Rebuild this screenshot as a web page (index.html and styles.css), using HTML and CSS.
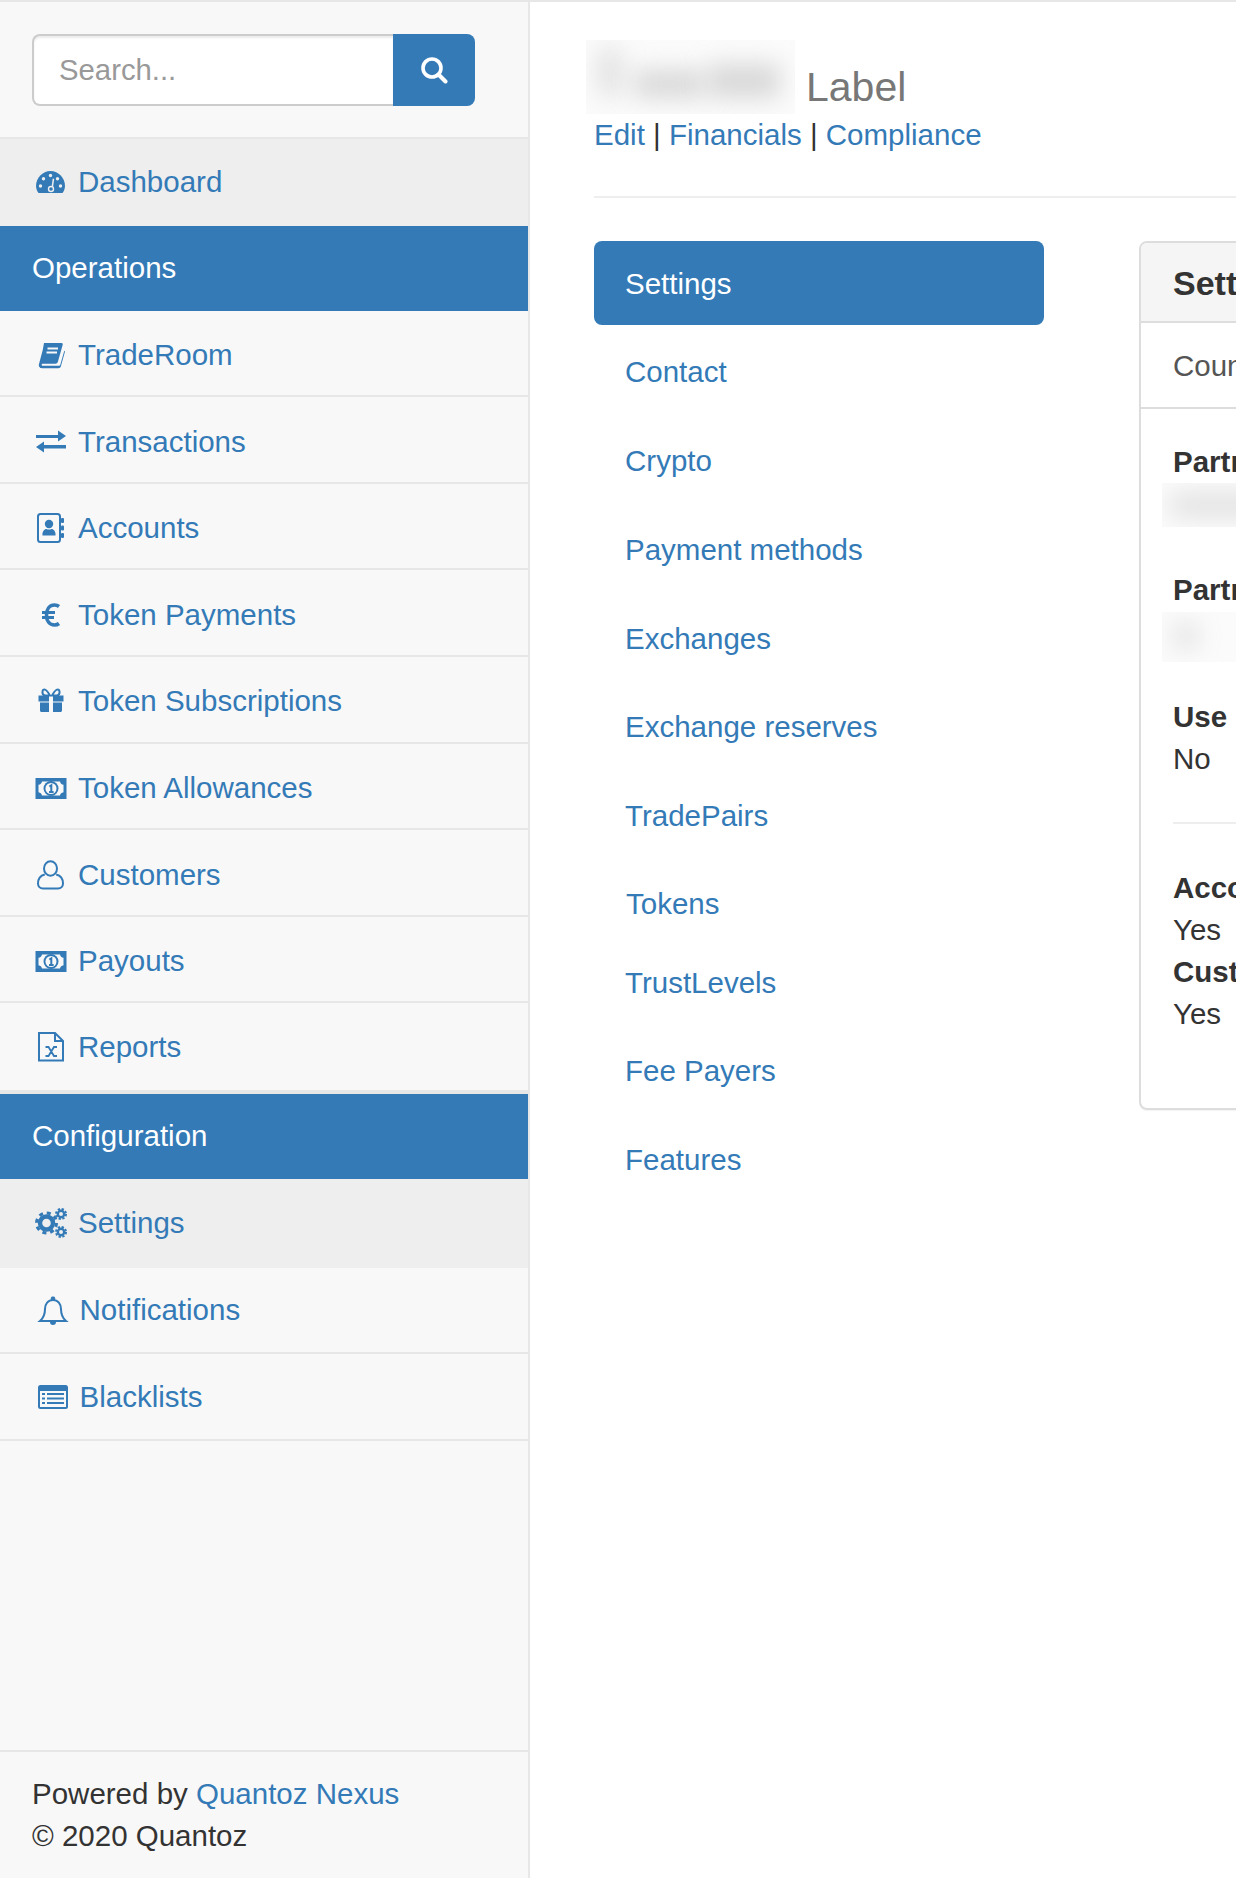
FILE: index.html
```html
<!DOCTYPE html>
<html lang="en">
<head>
<meta charset="utf-8">
<title>Label - Settings</title>
<link rel="stylesheet" href="styles.css">
</head>
<body>
<div class="app">
  <aside class="sidebar">
    <form class="search">
      <input class="search-input" type="text" placeholder="Search...">
      <button class="search-btn" type="button" aria-label="Search">
        <svg width="28" height="28" viewBox="0 0 28 28"><circle cx="12" cy="12" r="9" fill="none" stroke="#fff" stroke-width="3.6"/><path d="M18.5 18.5L25.5 25.5" stroke="#fff" stroke-width="4" stroke-linecap="round"/></svg>
      </button>
    </form>
    <nav class="side-nav">
      <a class="row row-tall row-current first" href="#"><svg class="ic" viewBox="0 0 32 30"><path d="M3.5 26C2 24 1 21.500 1 19 1 11 7.500 4 15.500 4S30 11 30 19c0 2.500-1 5-2.500 7z"/><g class="hole"><circle cx="5.500" cy="19" r="1.700"/><circle cx="8.500" cy="11.800" r="1.700"/><circle cx="15.500" cy="8.500" r="1.700"/><circle cx="25.500" cy="19" r="1.700"/><circle cx="22.500" cy="11.800" r="1.700"/><path d="M16.300 22L17.700 11.500 19.200 12 17.800 22z"/><circle cx="16" cy="22" r="3.200"/></g><circle cx="16" cy="22" r="1.800"/></svg><span>Dashboard</span></a>
      <div class="section">Operations</div>
      <a class="row" href="#"><svg class="ic" viewBox="0 0 32 30"><path d="M9 3h17.500c1 0 1.500.8 1.200 1.800l-4.800 17c-.4 1.300-1.200 2-2.500 2H8c-1 0-1.500.5-1.300 1.100.2.600.9.900 1.800.9h15.500c.7 0 1-.4 1.300-1l4-14 .7.800-4.200 15c-.3 1.100-1.200 1.700-2.300 1.700H7c-2 0-3.800-1.800-3-4.200l3.800-14.300z"/><path class="lines" d="M12.500 8.500h10.500M11.500 12.500h10.500" stroke-width="2"/></svg><span>TradeRoom</span></a>
      <a class="row" href="#"><svg class="ic" viewBox="0 0 32 30"><path d="M1 8h22V3.500l8 5.500-8 5.500V11H1zM31 18H9v-3.500L1 20l8 5.500V21.500h22z"/></svg><span>Transactions</span></a>
      <a class="row" href="#"><svg class="ic" viewBox="0 0 32 30"><rect class="line" x="3" y="1" width="22" height="28" rx="2.500"/><rect x="26" y="5" width="3" height="5" rx="1"/><rect x="26" y="12.500" width="3" height="5" rx="1"/><rect x="26" y="20" width="3" height="5" rx="1"/><circle cx="14" cy="11" r="4.200"/><path d="M7.500 22.500c-.5-4 2-6.500 4-6.500 1 .8 4 .8 5 0 2 0 4.500 2.500 4 6.500z"/></svg><span>Accounts</span></a>
      <a class="row" href="#"><svg class="ic" viewBox="0 0 32 30"><path class="line thick" d="M24 6.500C22.500 5.300 21 5 19.500 5 14.500 5 11.500 9 11.500 15s3 10 8 10c1.500 0 3-.3 4.500-1.500"/><path class="line bar" d="M7 12.500h13M7 17.500h12"/></svg><span>Token Payments</span></a>
      <a class="row" href="#"><svg class="ic" viewBox="0 0 32 30"><path class="line" d="M15 9.500C13 6 11.500 3.500 9.500 3.500 7 3.500 6.500 8 9.500 9.500zM17 9.500C19 6 20.500 3.500 22.500 3.500 25 3.500 25.500 8 22.500 9.500z"/><path d="M3.500 9.500h10.500v6H3.500zM18 9.500h10.500v6H18zM5 16.500h9v9.500H6.500c-.8 0-1.500-.7-1.500-1.500zM18 16.500h9v8c0 .8-.7 1.500-1.500 1.500H18z"/></svg><span>Token Subscriptions</span></a>
      <a class="row" href="#"><svg class="ic" viewBox="0 0 32 30"><rect x="0.500" y="5" width="31" height="21"/><path class="hole" d="M7 8.500h18c.4 1.800 1.500 3 3.500 3.300v7.400c-2 .3-3.100 1.500-3.500 3.300H7c-.4-1.800-1.500-3-3.500-3.300v-7.400c2-.3 3.100-1.500 3.500-3.300z"/><circle cx="16" cy="15.500" r="7.500"/><circle class="hole" cx="16" cy="15.500" r="5.500"/><path class="line one" d="M14.300 13.500l2-1.200v6.600M14 19h4.600"/></svg><span>Token Allowances</span></a>
      <a class="row" href="#"><svg class="ic" viewBox="0 0 32 30"><ellipse class="line" cx="15.500" cy="8.500" rx="6.500" ry="7.300"/><path class="line" d="M9.800 14.500C6 15.500 3 18.500 3 23.500c0 2.800 2 5 5 5h15c3 0 5-2.200 5-5 0-5-3-8-6.800-9"/></svg><span>Customers</span></a>
      <a class="row" href="#"><svg class="ic" viewBox="0 0 32 30"><rect x="0.500" y="5" width="31" height="21"/><path class="hole" d="M7 8.500h18c.4 1.800 1.500 3 3.500 3.300v7.400c-2 .3-3.100 1.500-3.500 3.300H7c-.4-1.800-1.500-3-3.500-3.300v-7.400c2-.3 3.100-1.500 3.500-3.300z"/><circle cx="16" cy="15.500" r="7.500"/><circle class="hole" cx="16" cy="15.500" r="5.500"/><path class="line one" d="M14.300 13.500l2-1.200v6.600M14 19h4.600"/></svg><span>Payouts</span></a>
      <a class="row row-last" href="#"><svg class="ic" viewBox="0 0 32 30"><path class="line" d="M4 1h16l8 8v19.500H4zM20 1v8h8"/><path class="line cross" d="M10.500 15h3l5.500 9h3M10.500 24h3l5.500-9h3"/></svg><span>Reports</span></a>
      <div class="section">Configuration</div>
      <a class="row row-tall row-current row-config" href="#"><svg class="ic" viewBox="0 0 32 30"><circle class="gear-teeth" cx="11.500" cy="15" r="10"/><circle class="gear" cx="11.500" cy="15" r="6.500"/><circle class="gear-teeth small" cx="26" cy="6" r="5"/><circle class="gear small" cx="26" cy="6" r="3.200"/><circle class="gear-teeth small" cx="26" cy="24" r="5"/><circle class="gear small" cx="26" cy="24" r="3.200"/></svg><span>Settings</span></a>
      <a class="row row-shift" href="#"><svg class="ic" viewBox="0 0 32 30"><path class="line" d="M3 26c3-2.500 5-5 5-12 0-5 3-9 8-9s8 4 8 9c0 7 2 9.500 5 12z"/><path d="M16 1.500a2 2 0 0 1 1.600 3.500h-3.200A2 2 0 0 1 16 1.500zM13 27h6a3 3 0 0 1-6 0z"/></svg><span>Notifications</span></a>
      <a class="row row-shift" href="#"><svg class="ic" viewBox="0 0 32 30"><rect x="1" y="3" width="30" height="24" rx="2.500"/><rect class="hole" x="3" y="9" width="26" height="16"/><path class="lines-blue" d="M5 12h3M10 12h17M5 16.500h3M10 16.500h17M5 21h3M10 21h17"/></svg><span>Blacklists</span></a>
    </nav>
    <footer class="side-foot">
      Powered by <a href="#">Quantoz Nexus</a><br>
      &copy; 2020 Quantoz
    </footer>
  </aside>

  <main class="main">
    <header class="page-head">
      <div class="title-line">
        <div class="redact redact-title"><i class="blob b1"></i><i class="blob b2"></i><i class="blob b3"></i></div>
        <h1 class="page-title">Label</h1>
      </div>
      <div class="head-links"><a href="#">Edit</a> | <a href="#">Financials</a> | <a href="#">Compliance</a></div>
    </header>
    <div class="content">
      <ul class="pills">
        <li class="pill pill-active"><a href="#">Settings</a></li>
        <li class="pill"><a href="#">Contact</a></li>
        <li class="pill"><a href="#">Crypto</a></li>
        <li class="pill"><a href="#">Payment methods</a></li>
        <li class="pill"><a href="#">Exchanges</a></li>
        <li class="pill"><a href="#">Exchange reserves</a></li>
        <li class="pill"><a href="#">TradePairs</a></li>
        <li class="pill pill-tokens"><a href="#">Tokens</a></li>
        <li class="pill"><a href="#">TrustLevels</a></li>
        <li class="pill"><a href="#">Fee Payers</a></li>
        <li class="pill"><a href="#">Features</a></li>
      </ul>
      <section class="panel">
        <div class="panel-head">Settings</div>
        <div class="panel-row">Country</div>
        <div class="panel-body">
          <div class="field">
            <div class="label">Partner name</div>
            <div class="redact redact-field"><i class="blob f1"></i></div>
          </div>
          <div class="field">
            <div class="label">Partner code</div>
            <div class="redact redact-field short"><i class="blob f2"></i></div>
          </div>
          <div class="field">
            <div class="label">Use</div>
            <div>No</div>
          </div>
          <hr class="panel-rule">
          <div class="label">Accounts</div>
          <div>Yes</div>
          <div class="label">Customers</div>
          <div>Yes</div>
        </div>
      </section>
    </div>
  </main>
</div>
</body>
</html>
```
FILE: styles.css
```css
* { box-sizing: border-box; }
html, body { margin: 0; padding: 0; }
body {
  width: 1236px;
  height: 1878px;
  overflow: hidden;
  background: #fff;
  color: #333;
  font-family: "Liberation Sans", Arial, sans-serif;
  font-size: 29.500px;
  line-height: 42px;
}
a { color: #337ab7; text-decoration: none; }

.app {
  display: flex;
  height: 1878px;
  border-top: 2px solid #e7e7e7;
}

/* sidebar */
.sidebar {
  flex: 0 0 530px;
  width: 530px;
  min-width: 0;
  display: flex;
  flex-direction: column;
  background: #f8f8f8;
  border-right: 2px solid #e7e7e7;
}
.search {
  display: flex;
  flex: 0 0 135px;
  padding: 31.500px 53px 31.500px 32px;
}
.search-input {
  flex: 1;
  width: 0;
  min-width: 0;
  height: 72px;
  padding: 0 25px;
  border: 2px solid #ccc;
  border-right: 0;
  border-radius: 8px 0 0 8px;
  background: #fff;
  box-shadow: inset 0 2px 2px rgba(0,0,0,.075);
  color: #555;
  font: 29.300px "Liberation Sans", Arial, sans-serif;
  outline: 0;
}
.search-input::placeholder { color: #999; opacity: 1; }
.search-btn {
  flex: 0 0 82px;
  display: flex;
  align-items: center;
  justify-content: center;
  height: 72px;
  padding: 0;
  border: 0;
  border-radius: 0 8px 8px 0;
  background: #337ab7;
}
.side-nav { flex: 1; display: flex; flex-direction: column; }
.row {
  display: flex;
  align-items: center;
  flex: 0 0 86.600px;
  padding: 4px 0 0 35px;
  border-bottom: 2px solid #e7e7e7;
  fill: #337ab7;
  stroke: none;
}
.row-tall { flex-basis: 89px; padding-top: 0; }
.row-current { background: #eee; border-bottom-color: #eee; --hole: #eee; }
.row-config { padding-top: 2px; }
.first { border-top: 2px solid #e7e7e7; }
.row-last { flex-basis: 90.500px; padding-bottom: 4px; border-bottom-width: 4px; }
.row-shift { padding: 1px 0 0 36.500px; }
.section {
  display: flex;
  align-items: center;
  flex: 0 0 84.700px;
  padding-left: 32px;
  background: #337ab7;
  color: #fff;
}
.ic {
  flex: 0 0 32px;
  width: 32px;
  height: 30px;
  margin-right: 11px;
  overflow: visible;
}
.hole, .hole circle, .hole path { fill: var(--hole, #f8f8f8); }
.line { fill: none; stroke: #337ab7; stroke-width: 2; }
.thick { stroke-width: 3.600; }
.bar { stroke-width: 2.800; }
.one { stroke-width: 2; }
.cross { stroke-width: 1.800; }
.lines { fill: none; stroke: #f8f8f8; }
.lines-blue { fill: none; stroke: #337ab7; stroke-width: 2; }
.gear { fill: none; stroke: #337ab7; stroke-width: 4.400; }
.gear.small { stroke-width: 2.400; }
.gear-teeth { fill: none; stroke: #337ab7; stroke-width: 3; stroke-dasharray: 4 3.850; }
.gear-teeth.small { stroke-width: 2; stroke-dasharray: 2.300 1.630; }
.side-foot {
  flex: 0 0 128px;
  padding: 21px 32px 0;
  border-top: 2px solid #e7e7e7;
}

/* main */
.main {
  flex: 1;
  min-width: 0;
  padding-left: 64px;
  overflow: hidden;
}
.page-head {
  height: 194px;
  padding-top: 38px;
}
.title-line { display: flex; align-items: flex-start; margin-left: -8px; height: 74px; }
.page-title {
  margin: 24px 0 0 11px;
  color: #777;
  font-size: 41px;
  font-weight: 400;
  line-height: 46px;
}
.head-links { height: 42px; white-space: nowrap; }
.content {
  display: flex;
  align-items: flex-start;
  gap: 95px;
  width: 1200px;
  padding-top: 43px;
  border-top: 2px solid #eee;
}
.redact { position: relative; overflow: hidden; background: #fbfbfb; }
.blob { position: absolute; display: block; background: #bbb; filter: blur(12px); }
.redact-title { flex: 0 0 209px; height: 74px; }
.b1 { left: 12px; top: 8px; width: 24px; height: 48px; opacity: .4; }
.b2 { left: 48px; top: 30px; width: 70px; height: 28px; opacity: .55; }
.b3 { left: 122px; top: 24px; width: 72px; height: 34px; opacity: .55; }
.redact-field { width: 200px; height: 44px; margin-left: -11px; }
.redact-field.short { height: 50px; margin-bottom: -8px; margin-top: 1px; width: 80px; }
.f1 { left: 8px; top: 10px; width: 190px; height: 24px; opacity: .4; }
.f2 { left: 12px; top: 12px; width: 24px; height: 24px; opacity: .4; }

.pills {
  flex: 0 0 450px;
  display: flex;
  flex-direction: column;
  gap: 4.700px;
  margin: 0;
  padding: 0;
  list-style: none;
}
.pill { height: 84px; }
.pill a {
  display: flex;
  align-items: center;
  height: 100%;
  padding: 1.500px 0 0 31px;
}
.pill-active a { background: #337ab7; color: #fff; border-radius: 8px; }
.pill-tokens { height: 73.300px; }
.pill-tokens a { align-items: flex-start; padding: 21px 0 0 32px; }

.panel {
  flex: 0 0 600px;
  height: 869px;
  border: 2px solid #ddd;
  border-radius: 8px;
  box-shadow: 0 1px 1px rgba(0,0,0,.05);
}
.panel-head {
  height: 80px;
  padding: 19px 32px 0;
  border-bottom: 2px solid #ddd;
  border-radius: 6px 6px 0 0;
  background: #f5f5f5;
  font-size: 34px;
  font-weight: 700;
}
.panel-row {
  height: 86px;
  padding: 22px 32px 0;
  border-bottom: 2px solid #ddd;
  color: #555;
}
.panel-body { padding: 32px 32px 0; }
.field { margin-bottom: 42px; }
.label { font-weight: 700; }
.panel-rule {
  height: 2px;
  margin: 0 0 43px;
  border: 0;
  background: #eee;
}
```
